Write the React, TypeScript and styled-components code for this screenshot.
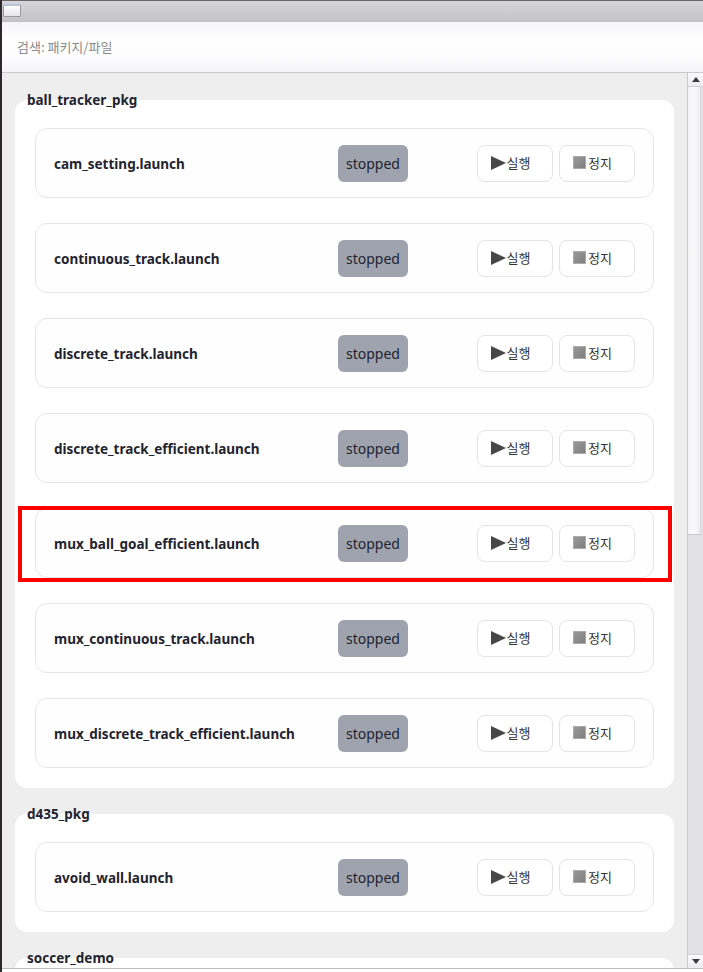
import * as React from 'react';
import styled, { createGlobalStyle } from 'styled-components';

interface Group {
  name: string;
  files: string[];
}

const groups: Group[] = [
  {
    name: 'ball_tracker_pkg',
    files: [
      'cam_setting.launch',
      'continuous_track.launch',
      'discrete_track.launch',
      'discrete_track_efficient.launch',
      'mux_ball_goal_efficient.launch',
      'mux_continuous_track.launch',
      'mux_discrete_track_efficient.launch',
    ],
  },
  { name: 'd435_pkg', files: ['avoid_wall.launch'] },
  // only the top edge of this one is visible in the window
  { name: 'soccer_demo', files: [] },
];

const highlighted = 'mux_ball_goal_efficient.launch';

const GlobalStyle = createGlobalStyle`
  html, body {
    margin: 0;
    padding: 0;
    background: #ffffff;
  }
  body {
    font-family: "Noto Sans", "Noto Sans CJK KR", sans-serif;
  }
`;

const Window = styled.div`
  width: 703px;
  height: 972px;
  display: flex;
  flex-direction: column;
  border-left: 2px solid #2c282c;
  box-sizing: border-box;
  overflow: hidden;
  background: #ffffff;
`;

const TitleBar = styled.div`
  height: 22px;
  flex: none;
  display: flex;
  align-items: flex-start;
  padding: 3px 0 0 1px;
  box-sizing: border-box;
  border-top: 1px solid #6a686c;
  background: linear-gradient(#d6d5d9, #c3c2c6);
`;

const WindowIcon = styled.div`
  width: 18px;
  height: 13px;
  box-sizing: border-box;
  border: 1px solid #9a99a0;
  border-top: 2px solid #b9c4d8;
  border-radius: 2px;
  background: linear-gradient(#ffffff, #e6e6ea);
`;

const SearchBar = styled.div`
  height: 51px;
  flex: none;
  display: flex;
  align-items: center;
  padding: 0 0 1px 15px;
  box-sizing: border-box;
  border-bottom: 1px solid #c9c8cc;
  background: linear-gradient(#f6f5f8, #fefefe 35%, #fdfdfe 70%, #f3f2f5);
  font-family: "Noto Sans CJK KR", "Noto Sans", sans-serif;
  font-size: 13px;
  color: #8a8a8a;
`;

const Body = styled.div`
  flex: 1;
  min-height: 0;
  display: flex;
  border-bottom: 1px solid #bdbcc0;
  margin-bottom: 3px;
`;

const List = styled.div`
  flex: 1;
  min-width: 0;
  overflow: hidden;
  background: #eeeeee;
  padding: 18px 13px 0 13px;
  display: flex;
  flex-direction: column;
  gap: 17px;
`;

const GroupBox = styled.section`
  display: block;
  flex: none;
`;

const GroupTitle = styled.div`
  height: 18px;
  line-height: 18px;
  margin-bottom: -9px;
  padding-left: 12px;
  font-size: 13.5px;
  font-weight: 700;
  color: #1f2430;
`;

const GroupCard = styled.div`
  background: #ffffff;
  border-radius: 12px;
  padding: 28px 20px 20px 20px;
  display: flex;
  flex-direction: column;
  gap: 25px;
`;

const Item = styled.div`
  position: relative;
  height: 70px;
  box-sizing: border-box;
  border: 1px solid #e6e6e8;
  border-radius: 12px;
  background: #fefefe;
  padding: 0 18px;
  display: grid;
  grid-template-columns: 284px 70px 1fr;
  align-items: center;
`;

const Highlight = styled.div`
  position: absolute;
  left: -18px;
  right: -19px;
  top: -3px;
  bottom: -5px;
  border: 4px solid #ff0000;
  pointer-events: none;
`;

const FileName = styled.div`
  padding-top: 2px;
  font-size: 13.5px;
  font-weight: 700;
  color: #1f2430;
  white-space: nowrap;
`;

const Status = styled.div`
  height: 37px;
  border-radius: 6px;
  background: #9ea3ae;
  color: #1f2430;
  font-size: 14px;
  display: flex;
  align-items: center;
  justify-content: center;
`;

const Actions = styled.div`
  display: flex;
  justify-content: flex-end;
  gap: 6px;
`;

const ActionButton = styled.button`
  width: 76px;
  height: 37px;
  box-sizing: border-box;
  border: 1px solid #e4e4e6;
  border-radius: 8px;
  background: #ffffff;
  display: flex;
  align-items: center;
  justify-content: center;
  gap: 1px;
  padding: 0 9px 1px 0;
  font-family: "Noto Sans CJK KR", "Noto Sans", sans-serif;
  font-size: 13px;
  color: #333333;
`;

const ScrollBar = styled.div`
  width: 16px;
  flex: none;
  display: flex;
  flex-direction: column;
  border-left: 1px solid #c8c7cb;
  background: #e2e1e5;
  box-sizing: border-box;
`;

const ScrollArrow = styled.div`
  height: 14px;
  flex: none;
  display: flex;
  align-items: center;
  justify-content: center;
  background: linear-gradient(#fbfbfc, #ececef);
  border-bottom: 1px solid #d2d1d5;
  box-sizing: border-box;
`;

const ScrollArrowDown = styled(ScrollArrow)`
  border-bottom: none;
  border-top: 1px solid #d2d1d5;
`;

const Track = styled.div`
  flex: 1;
  display: flex;
  flex-direction: column;
`;

const Thumb = styled.div`
  height: 448px;
  margin-right: 2px;
  box-sizing: border-box;
  border-right: 1px solid #d9d8dc;
  border-bottom: 1px solid #c8c7cb;
  background: linear-gradient(90deg, #f4f4f6, #fafafb 50%, #efeff2);
`;

const PlayIcon = () => (
  <svg width="15" height="14" viewBox="0 0 15 14">
    <polygon points="0,0 15,7 0,14" fill="#474747" />
  </svg>
);

const StopIcon = () => (
  <svg width="14" height="13" viewBox="0 0 14 13">
    <defs>
      <linearGradient id="stopFill" x1="0" y1="0" x2="1" y2="1">
        <stop offset="0" stopColor="#9a9a9a" />
        <stop offset="1" stopColor="#7e7e7e" />
      </linearGradient>
    </defs>
    <rect x="0.5" y="0.5" width="12" height="12" fill="url(#stopFill)" stroke="#aaaaaa" />
  </svg>
);

const Arrow = ({ down }: { down?: boolean }) => (
  <svg width="8" height="5" viewBox="0 0 8 5">
    <polygon points={down ? '0,0 8,0 4,5' : '4,0 8,5 0,5'} fill="#3c3c3c" />
  </svg>
);

export default function App() {
  return (
    <Window>
      <GlobalStyle />
      <TitleBar>
        <WindowIcon />
      </TitleBar>
      <SearchBar>검색: 패키지/파일</SearchBar>
      <Body>
        <List>
          {groups.map((group) => (
            <GroupBox key={group.name}>
              <GroupTitle>{group.name}</GroupTitle>
              <GroupCard>
                {group.files.map((file) => (
                  <Item key={file}>
                    <FileName>{file}</FileName>
                    <Status>stopped</Status>
                    <Actions>
                      <ActionButton>
                        <PlayIcon />
                        실행
                      </ActionButton>
                      <ActionButton>
                        <StopIcon />
                        정지
                      </ActionButton>
                    </Actions>
                    {file === highlighted && <Highlight />}
                  </Item>
                ))}
              </GroupCard>
            </GroupBox>
          ))}
        </List>
        <ScrollBar>
          <ScrollArrow>
            <Arrow />
          </ScrollArrow>
          <Track>
            <Thumb />
          </Track>
          <ScrollArrowDown>
            <Arrow down />
          </ScrollArrowDown>
        </ScrollBar>
      </Body>
    </Window>
  );
}
